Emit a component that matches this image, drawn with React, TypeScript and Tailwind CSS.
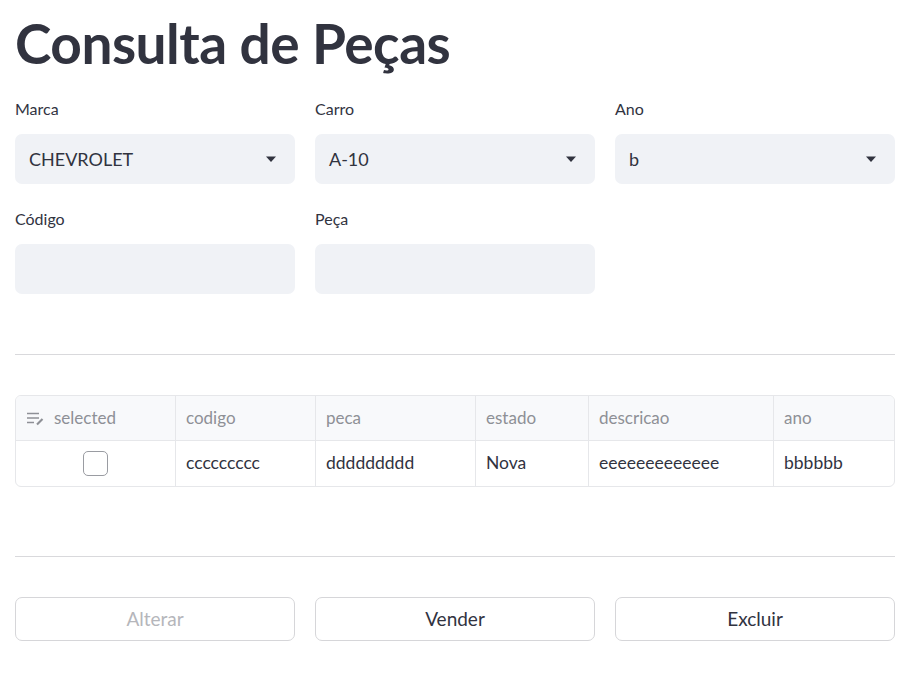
import React from "react";

const font = { fontFamily: '"Lato", "Liberation Sans", sans-serif' };

function Caret() {
  return (
    <svg width="12" height="8" viewBox="0 0 12 8" className="shrink-0">
      <path d="M1 1.5h10L6 7z" fill="#31333F" />
    </svg>
  );
}

function Select({ label, value }: { label: string; value: string }) {
  return (
    <div className="flex flex-col">
      <span className="text-[16px] leading-[22px] text-[#31333F] mb-[14px]">{label}</span>
      <div className="h-[50px] rounded-[7px] bg-[#F0F2F6] flex items-center justify-between pl-[14px] pr-[18px]">
        <span className="text-[18px] text-[#31333F]">{value}</span>
        <Caret />
      </div>
    </div>
  );
}

function TextInput({ label }: { label: string }) {
  return (
    <div className="flex flex-col">
      <span className="text-[16px] leading-[22px] text-[#31333F] mb-[14px]">{label}</span>
      <div className="h-[50px] rounded-[7px] bg-[#F0F2F6]" />
    </div>
  );
}

function EditIcon() {
  return (
    <svg width="20" height="16" viewBox="0 0 20 16" className="shrink-0">
      <path d="M1 3.5h12M1 8h12M1 12.5h7" stroke="#8e9096" strokeWidth="1.6" fill="none" />
      <path d="M11 14.5l5.5-5.5" stroke="#8e9096" strokeWidth="2.2" fill="none" />
    </svg>
  );
}

const cols = [
  { name: "selected", w: "w-[160px]" },
  { name: "codigo", w: "w-[140px]" },
  { name: "peca", w: "w-[160px]" },
  { name: "estado", w: "w-[113px]" },
  { name: "descricao", w: "w-[185px]" },
  { name: "ano", w: "flex-1" },
];

const row = ["ccccccccc", "ddddddddd", "Nova", "eeeeeeeeeeeee", "bbbbbb"];

export default function App() {
  return (
    <div className="w-[916px] h-[684px] bg-white pl-[15px] overflow-hidden" style={font}>
      <div className="w-[880px]">
        <h1 className="text-[55px] font-bold text-[#31333F] leading-[60px] pt-[13px] tracking-[-0.5px]">
          Consulta de Peças
        </h1>

        <div className="grid grid-cols-3 gap-x-[20px] mt-[25px]">
          <Select label="Marca" value="CHEVROLET" />
          <Select label="Carro" value="A-10" />
          <Select label="Ano" value="b" />
        </div>

        <div className="grid grid-cols-3 gap-x-[20px] mt-[24px]">
          <TextInput label="Código" />
          <TextInput label="Peça" />
        </div>

        <div className="h-px bg-[#d9d9dc] mt-[60px]" />

        <div className="mt-[40px] border border-[#e6e7ea] rounded-[6px] overflow-hidden">
          <div className="flex h-[45px] bg-[#F8F9FB] border-b border-[#e6e7ea]">
            {cols.map((c, i) => (
              <div
                key={c.name}
                className={`${c.w} flex items-center gap-[8px] px-[10px] text-[17px] text-[#8e9096] ${i < cols.length - 1 ? "border-r border-[#e6e7ea]" : ""}`}
              >
                {i === 0 && <EditIcon />}
                <span>{c.name}</span>
              </div>
            ))}
          </div>
          <div className="flex h-[45px]">
            <div className="w-[160px] flex items-center justify-center border-r border-[#e6e7ea]">
              <div className="w-[25px] h-[25px] rounded-[5px] border-[1.5px] border-[#9a9ca2] bg-white" />
            </div>
            {row.map((v, i) => (
              <div
                key={i}
                className={`${cols[i + 1].w} flex items-center px-[10px] text-[17.5px] text-[#31333F] ${i < row.length - 1 ? "border-r border-[#e6e7ea]" : ""}`}
              >
                {v}
              </div>
            ))}
          </div>
        </div>

        <div className="h-px bg-[#d9d9dc] mt-[69px]" />

        <div className="grid grid-cols-3 gap-x-[20px] mt-[40px]">
          <button className="h-[44px] rounded-[7px] border border-[#d6d6d9] bg-white text-[19px] text-[#b5b6bb]">
            Alterar
          </button>
          <button className="h-[44px] rounded-[7px] border border-[#d6d6d9] bg-white text-[19px] text-[#31333F]">
            Vender
          </button>
          <button className="h-[44px] rounded-[7px] border border-[#d6d6d9] bg-white text-[19px] text-[#31333F]">
            Excluir
          </button>
        </div>
      </div>
    </div>
  );
}
